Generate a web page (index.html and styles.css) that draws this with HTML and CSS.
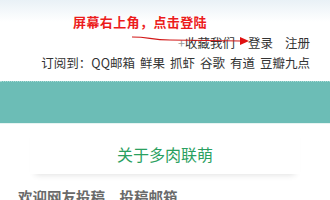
FILE: index.html
```html
<!DOCTYPE html>
<html lang="zh">
<head>
<meta charset="utf-8">
<link rel="stylesheet" href="styles.css">
</head>
<body>
<div class="page">
  <header class="head">
    <div class="tip">屏幕右上角，点击登陆</div>
    <div class="links"><span class="fav"><span class="plus">+</span>收藏我们</span><a class="lnk login">登录</a><a class="lnk">注册</a></div>
    <div class="sub"><span>订阅到：</span><a>QQ邮箱</a><a>鲜果</a><a>抓虾</a><a>谷歌</a><a>有道</a><a>豆瓣九点</a></div>
    <svg class="arrow" width="330" height="60" viewBox="0 0 330 60">
      <path d="M132 37 C 150 37, 150 40, 170 40 L 241 41" fill="none" stroke="#d21818" stroke-width="1.2"/>
      <polygon points="240,37 249,41 240,45" fill="#e01010"/>
    </svg>
  </header>
  <div class="band"></div>
  <section class="about">
    <h2 class="title">关于多肉联萌</h2>
  </section>
  <p class="contrib">欢迎网友投稿，投稿邮箱</p>
</div>
</body>
</html>
```
FILE: styles.css
```css
html, body { margin: 0; padding: 0; }
body {
  width: 330px;
  height: 200px;
  overflow: hidden;
  background: #fff;
  font-family: "Noto Sans CJK SC", "Noto Sans", sans-serif;
}
.page { width: 330px; }
.head {
  position: relative;
  height: 81px;
  background: linear-gradient(#e9f1f6 0px, #ffffff 22px);
  box-sizing: border-box;
  padding-top: 13px;
}
.tip {
  padding-left: 73px;
  font-size: 13px;
  letter-spacing: 0.4px;
  line-height: 18px;
  color: #ec1c1c;
  font-weight: bold;
}
.links {
  margin-top: 4px;
  display: flex;
  justify-content: flex-end;
  padding-right: 20px;
  font-size: 12.5px;
  line-height: 16px;
  color: #333;
}
.plus { color: #999; }
.lnk { margin-left: 12px; }
.login { margin-left: 13px; }
.sub {
  margin-top: 4px;
  display: flex;
  justify-content: flex-end;
  gap: 5px;
  padding-right: 20px;
  font-size: 12.5px;
  line-height: 16px;
  color: #333;
}
.sub span { margin-right: -5px; }
.arrow { position: absolute; left: 0; top: 0; }
.band {
  height: 41px;
  background: #6cbdb6;
  border-top: 1px dotted #a8dbd6;
  border-bottom: 1px solid #e6f4f2;
}
.about {
  margin: 0 30px;
  padding-top: 20px;
  height: 30px;
  text-align: center;
  box-shadow: 0 6px 6px -5px rgba(0,0,0,0.12);
}
.title {
  margin: 0;
  font-size: 16px;
  line-height: 20px;
  font-weight: normal;
  color: #2aa060;
}
.contrib {
  margin: 13px 0 0 18px;
  font-size: 14.5px;
  line-height: 20px;
  font-weight: bold;
  color: #6a6a6a;
}
```
